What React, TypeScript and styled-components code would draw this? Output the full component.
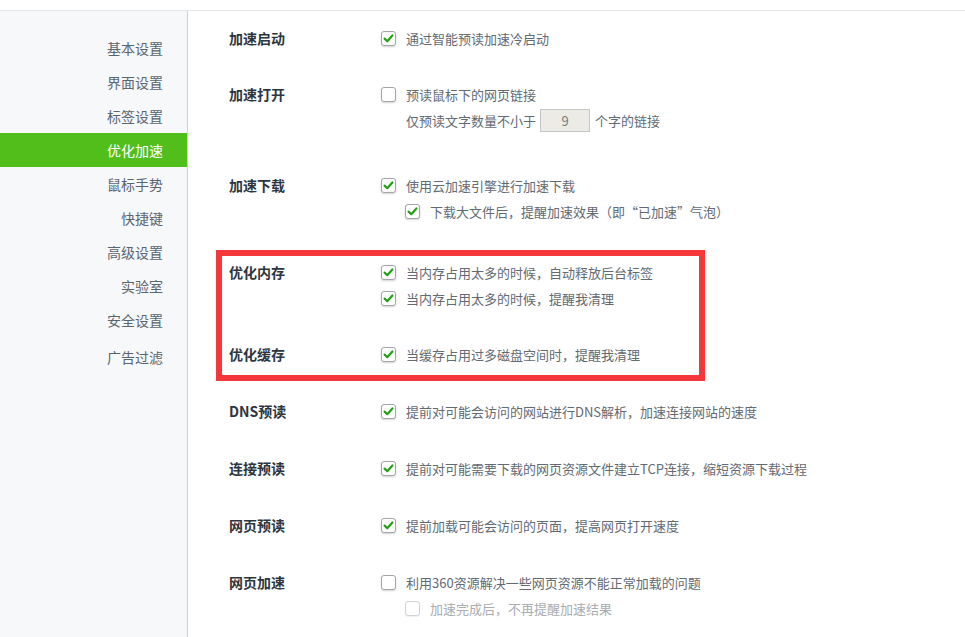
import styled, { createGlobalStyle } from "styled-components";

const GlobalStyle = createGlobalStyle`
  body {
    margin: 0;
    background: #ffffff;
    font-family: "Noto Sans CJK SC", "Noto Sans", sans-serif;
  }
`;

const Page = styled.div`
  display: flex;
  flex-direction: column;
  height: 637px;
  overflow: hidden;
`;

const TopStrip = styled.div`
  height: 10px;
  flex-shrink: 0;
  border-bottom: 1px solid #e4e6e8;
`;

const Body = styled.div`
  display: flex;
  flex: 1;
`;

const Sidebar = styled.nav`
  width: 188px;
  flex-shrink: 0;
  background: #f7f8fa;
  border-right: 1px solid #cdd0d4;
  padding-top: 20px;
  box-sizing: border-box;
`;

const NavItem = styled.div<{ $active?: boolean; $gapBefore?: number }>`
  height: 34px;
  line-height: 34px;
  margin-top: ${(p) => p.$gapBefore ?? 0}px;
  padding-right: 24px;
  text-align: right;
  font-size: 14px;
  color: ${(p) => (p.$active ? "#ffffff" : "#5b6570")};
  background: ${(p) => (p.$active ? "#52be1c" : "transparent")};
`;

const Content = styled.main`
  flex: 1;
  padding: 14px 0 0 41px;
`;

const Group = styled.section<{ $after?: number }>`
  display: grid;
  grid-template-columns: 152px 1fr;
  margin-bottom: ${(p) => p.$after ?? 31}px;
`;

const Label = styled.div`
  font-size: 14px;
  font-weight: 700;
  color: #2d353e;
  line-height: 26px;
`;

const Options = styled.div`
  display: flex;
  flex-direction: column;
`;

const Line = styled.div<{ $indent?: number; $disabled?: boolean }>`
  display: flex;
  align-items: center;
  height: 26px;
  padding-left: ${(p) => p.$indent ?? 0}px;
  font-size: 13px;
  color: ${(p) => (p.$disabled ? "#a9acb0" : "#626a73")};
  white-space: nowrap;
`;

const Box = styled.span<{ $disabled?: boolean }>`
  width: 15px;
  height: 15px;
  box-sizing: border-box;
  border: 1px solid ${(p) => (p.$disabled ? "#cfd1d3" : "#a4a7aa")};
  border-radius: 3px;
  background: #ffffff;
  box-shadow: ${(p) =>
    p.$disabled ? "0 1px 1px rgba(0,0,0,0.06)" : "0 1px 2px rgba(0,0,0,0.18)"};
  margin-right: 10px;
  flex-shrink: 0;
  display: flex;
  align-items: center;
  justify-content: center;
`;

const CountInput = styled.span`
  width: 50px;
  height: 23px;
  box-sizing: border-box;
  margin: 0 5px 0 4px;
  border: 1px solid #c6c6c4;
  background: #ecebe6;
  color: #7a7d80;
  font-size: 13px;
  display: flex;
  align-items: center;
  justify-content: center;
`;

// red frame drawn around the memory / cache block
const Highlight = styled.div`
  position: relative;
  margin-bottom: 31px;

  &::after {
    content: "";
    position: absolute;
    left: -13px;
    top: -9px;
    width: 489px;
    bottom: -14px;
    border: 6px solid #f5363a;
    box-sizing: border-box;
    pointer-events: none;
  }
`;

const Check = ({ on, disabled }: { on?: boolean; disabled?: boolean }) => (
  <Box $disabled={disabled}>
    {on && (
      <svg width="11" height="11" viewBox="0 0 11 11">
        <path
          d="M1.6 5.6 L4.3 8.2 L9.4 2.4"
          fill="none"
          stroke="#23a015"
          strokeWidth="2.2"
          strokeLinecap="round"
          strokeLinejoin="round"
        />
      </svg>
    )}
  </Box>
);

const navItems = [
  "基本设置",
  "界面设置",
  "标签设置",
  "优化加速",
  "鼠标手势",
  "快捷键",
  "高级设置",
  "实验室",
  "安全设置",
  "广告过滤",
];

const App = () => {
  return (
    <Page>
      <GlobalStyle />
      <TopStrip />
      <Body>
        <Sidebar>
          {navItems.map((name, i) => (
            <NavItem
              key={name}
              $active={name === "优化加速"}
              $gapBefore={i === navItems.length - 1 ? 3 : 0}
            >
              {name}
            </NavItem>
          ))}
        </Sidebar>
        <Content>
          <Group $after={30}>
            <Label>加速启动</Label>
            <Options>
              <Line>
                <Check on />
                通过智能预读加速冷启动
              </Line>
            </Options>
          </Group>

          <Group $after={39}>
            <Label>加速打开</Label>
            <Options>
              <Line>
                <Check />
                预读鼠标下的网页链接
              </Line>
              <Line $indent={25}>
                仅预读文字数量不小于
                <CountInput>9</CountInput>
                个字的链接
              </Line>
            </Options>
          </Group>

          <Group $after={35}>
            <Label>加速下载</Label>
            <Options>
              <Line>
                <Check on />
                使用云加速引擎进行加速下载
              </Line>
              <Line $indent={24}>
                <Check on />
                下载大文件后，提醒加速效果（即“已加速”气泡）
              </Line>
            </Options>
          </Group>

          <Highlight>
            <Group $after={30}>
              <Label>优化内存</Label>
              <Options>
                <Line>
                  <Check on />
                  当内存占用太多的时候，自动释放后台标签
                </Line>
                <Line>
                  <Check on />
                  当内存占用太多的时候，提醒我清理
                </Line>
              </Options>
            </Group>
            <Group $after={0}>
              <Label>优化缓存</Label>
              <Options>
                <Line>
                  <Check on />
                  当缓存占用过多磁盘空间时，提醒我清理
                </Line>
              </Options>
            </Group>
          </Highlight>

          <Group>
            <Label>DNS预读</Label>
            <Options>
              <Line>
                <Check on />
                提前对可能会访问的网站进行DNS解析，加速连接网站的速度
              </Line>
            </Options>
          </Group>

          <Group>
            <Label>连接预读</Label>
            <Options>
              <Line>
                <Check on />
                提前对可能需要下载的网页资源文件建立TCP连接，缩短资源下载过程
              </Line>
            </Options>
          </Group>

          <Group>
            <Label>网页预读</Label>
            <Options>
              <Line>
                <Check on />
                提前加载可能会访问的页面，提高网页打开速度
              </Line>
            </Options>
          </Group>

          <Group>
            <Label>网页加速</Label>
            <Options>
              <Line>
                <Check />
                利用360资源解决一些网页资源不能正常加载的问题
              </Line>
              <Line $indent={24} $disabled>
                <Check disabled />
                加速完成后，不再提醒加速结果
              </Line>
            </Options>
          </Group>
        </Content>
      </Body>
    </Page>
  );
};

export default App;
